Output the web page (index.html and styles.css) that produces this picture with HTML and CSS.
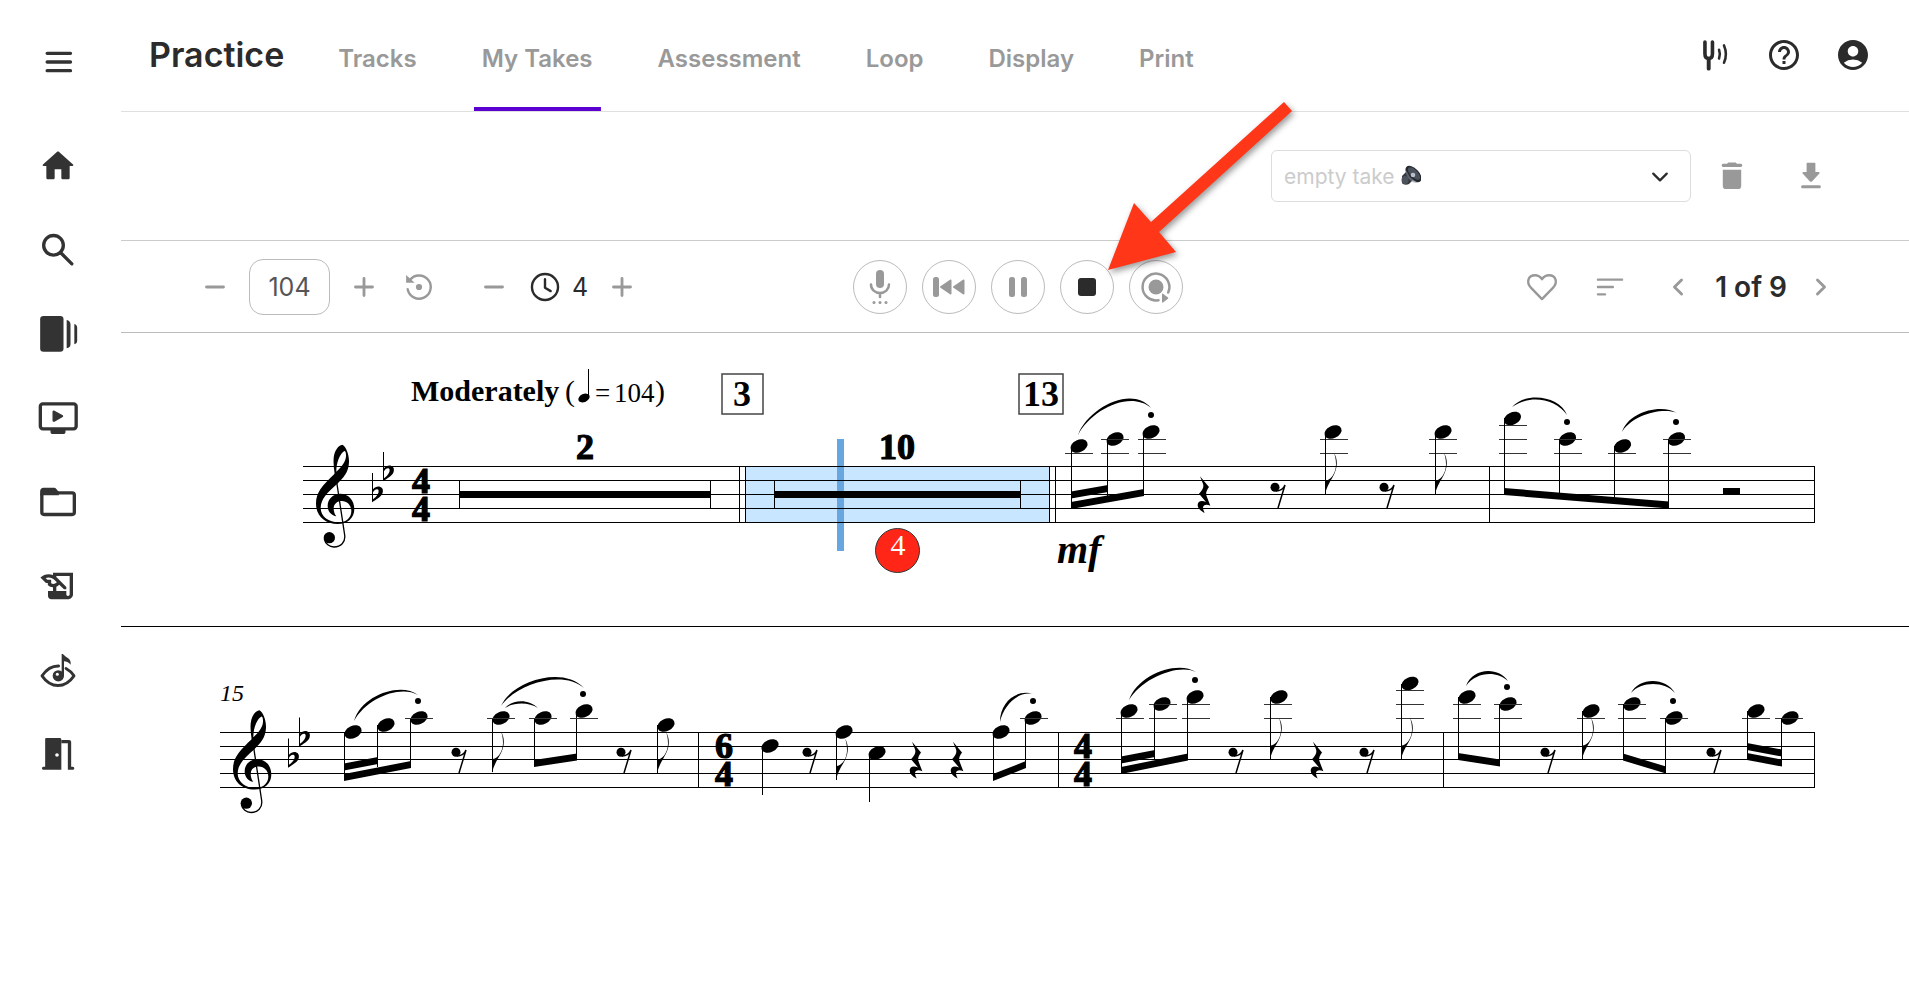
FILE: index.html
```html
<!DOCTYPE html>
<html lang="en">
<head>
	<meta charset="utf-8">
	<meta name="viewport" content="width=device-width, initial-scale=1">
	<title>Practice</title>
	<link rel="stylesheet" href="styles.css">
</head>
<body>
	<div class="app">
		<aside class="sidebar">
			<button class="icon-btn menu" aria-label="Menu">
				<svg viewBox="0 0 24 24" class="line"><path d="M5.500 6.800h14M5.500 12h14M5.500 17.200h14"/></svg>
			</button>
			<nav class="side-nav">
				<a href="#" aria-label="Home"><svg viewBox="0 0 24 24"><path d="M10 19v-5h4v5c0 .55.45 1 1 1h3c.55 0 1-.45 1-1v-7h1.700c.46 0 .68-.57.33-.87L12.670 3.600c-.38-.34-.96-.34-1.340 0l-8.360 7.530c-.34.3-.13.87.33.87H5v7c0 .55.45 1 1 1h3c.55 0 1-.45 1-1z"/></svg></a>
				<a href="#" aria-label="Search"><svg viewBox="0 0 24 24" class="line"><circle cx="9.300" cy="9.200" r="5.900"/><path d="M13.800 13.800l6.500 6.500"/></svg></a>
				<a href="#" aria-label="Collections"><svg viewBox="0 0 24 24"><rect x="1.300" y="1.200" width="14" height="21.500" rx="2"/><path d="M17.200 3.600c1.500.3 2.300 1.200 2.300 2.500v12c0 1.300-.8 2.200-2.300 2.500zM21.800 6c1.200.4 1.700 1.200 1.700 2.200v7.800c0 1-.5 1.800-1.700 2.200z"/></svg></a>
				<a href="#" aria-label="Videos"><svg viewBox="0 0 24 24"><rect x="1.400" y="3.500" width="21.500" height="15" rx="1.500" class="line"/><path d="M7.500 19h9v1.200c0 .9-.5 1.400-1.400 1.400H8.900c-.9 0-1.400-.5-1.400-1.400zM8.700 8.400c0-.8.6-1.100 1.200-.8l4.700 2.600c.7.4.7 1 0 1.400l-4.700 2.600c-.6.3-1.200 0-1.200-.8z"/></svg></a>
				<a href="#" aria-label="Folders"><svg viewBox="0 0 24 24"><rect x="2.300" y="6.500" width="19.500" height="13" rx="1.300" class="line"/><path d="M1.300 8V5.500c0-1.200.8-2 2-2h6c.8 0 1.300.3 1.800.8L12.500 6v2z"/></svg></a>
				<a href="#" aria-label="Composing"><svg viewBox="0 0 24 24"><path d="M9 4v1.380c-.83-.33-1.720-.5-2.610-.5-1.790 0-3.580.68-4.950 2.050l3.330 3.330h1.110v1.110c.86.86 1.980 1.310 3.110 1.360V15H6v3c0 1.100.9 2 2 2h10c1.660 0 3-1.340 3-3V4H9zm-1.110 6.410V8.260H5.610L4.570 7.220a5.070 5.070 0 0 1 1.820-.34c1.340 0 2.590.52 3.540 1.460l1.410 1.410-.2.2c-.51.51-1.190.8-1.920.8-.47 0-.93-.12-1.330-.34zM19 17c0 .55-.45 1-1 1s-1-.45-1-1v-2h-6v-2.590c.57-.23 1.100-.57 1.560-1.030l.2-.2L15.590 14H17v-1.410l-6-5.970V6h8v11z"/></svg></a>
				<a href="#" aria-label="Sight reading"><svg viewBox="0 0 24 24"><path class="thin" d="M12.400 9.600C8.500 9.500 4.800 12 2.400 15.500c2.400 3.500 5.800 5.800 9.600 5.800s7.200-2.300 9.600-5.800c-1.300-1.900-2.900-3.400-4.800-4.400"/><circle cx="12.200" cy="15.500" r="3.400"/><path d="M14.200 2.400c.7-.2 1.100.2 1.700.9C17.500 5.100 20 5 19.600 8.800c-1.300-1.700-2.700-2.100-4-2.100v9h-1.400z"/><circle cx="11.600" cy="14.600" r=".9" fill="#fff"/></svg></a>
				<a href="#" aria-label="Leave"><svg viewBox="0 0 24 24"><path fill-rule="evenodd" d="M5 2.400h8c.6 0 1 .4 1 1V21.500H3.300c-1.100 0-1.300-1.800 0-1.900h1V3.100c0-.4.3-.7.700-.7zm6.400 9.100a1.100 1.100 0 1 0 0 2.200 1.100 1.100 0 0 0 0-2.200z"/><path d="M14 3.600h4.600c.8 0 1.300.5 1.300 1.300v14.700h1c1.200.1 1.100 1.900 0 1.900h-3V5.500H14z"/></svg></a>
			</nav>
		</aside>

		<div class="main">
			<header class="header">
				<h1 class="title">Practice</h1>
				<nav class="tabs">
					<a href="#" class="tab">Tracks</a>
					<a href="#" class="tab active">My Takes</a>
					<a href="#" class="tab">Assessment</a>
					<a href="#" class="tab">Loop</a>
					<a href="#" class="tab">Display</a>
					<a href="#" class="tab">Print</a>
				</nav>
				<div class="account">
					<button class="icon-btn" aria-label="Tuner"><svg viewBox="0 0 24 24" class="line thinner"><path stroke-width="2.400" d="M5.300 3.400v7.800c0 2.100.8 3.100 2.500 3.100s2.500-1 2.500-3.100V3.400"/><path d="M7.800 14.500v6.600" stroke-width="2.600"/><path d="M14.700 8.500c.7 1.900.7 3.900 0 5.800M18 5.600c1.600 3.700 1.600 7.900 0 11.600"/></svg></button>
					<button class="icon-btn" aria-label="Help"><svg viewBox="0 0 24 24"><path d="M11 18h2v-2h-2v2zm1-16C6.480 2 2 6.480 2 12s4.480 10 10 10 10-4.480 10-10S17.520 2 12 2zm0 18c-4.410 0-8-3.590-8-8s3.590-8 8-8 8 3.590 8 8-3.590 8-8 8zm0-14c-2.210 0-4 1.790-4 4h2c0-1.100.9-2 2-2s2 .9 2 2c0 2-3 1.750-3 5h2c0-2.250 3-2.500 3-5 0-2.210-1.790-4-4-4z"/></svg></button>
					<button class="icon-btn" aria-label="Account"><svg viewBox="0 0 24 24"><path d="M12 2C6.480 2 2 6.480 2 12s4.480 10 10 10 10-4.480 10-10S17.520 2 12 2zm0 4c1.930 0 3.500 1.570 3.500 3.500S13.930 13 12 13s-3.500-1.570-3.500-3.500S10.070 6 12 6zm0 14c-2.030 0-4.430-.82-6.140-2.880a9.950 9.950 0 0 1 12.280 0C16.430 19.180 14.030 20 12 20z"/></svg></button>
				</div>
			</header>

			<div class="take-bar">
				<div class="take-picker">
					<select class="take-select" aria-label="Take">
						<option>empty take</option>
					</select>
					<svg class="speaker" viewBox="0 0 20 20">
						<path d="M1 11l5-5 6 9-4 4c-2 1-6 1-7-1z" fill="#34383e"/>
						<ellipse cx="4" cy="15" rx="3.500" ry="4" fill="#4d535c"/>
						<ellipse cx="12.500" cy="9" rx="10" ry="5.500" transform="rotate(46 12.500 9)" fill="#23262b"/>
						<ellipse cx="13" cy="8.500" rx="8" ry="3.700" transform="rotate(46 13 8.500)" fill="#4a515b"/>
						<circle cx="12" cy="10" r="2.300" fill="#b9c0cc"/>
						<path d="M4 3l5 9 8 6c-6 1-13-6-13-15z" fill="#858d9c" opacity=".55"/>
					</svg>
					<svg class="chevron line" viewBox="0 0 16 10"><path d="M2 2l6 6 6-6"/></svg>
				</div>
				<button class="icon-btn gray" aria-label="Delete take"><svg viewBox="0 0 24 24"><path d="M5.500 7.500h13V19c0 1.400-.8 2.200-2.200 2.200H7.700c-1.400 0-2.200-.8-2.200-2.200zM5.700 3.400h2.800l.9-.9h5.200l.9.9h2.800c1.300.1 1.300 2.100 0 2.200H5.700c-1.300-.1-1.300-2.100 0-2.200z"/></svg></button>
				<button class="icon-btn gray" aria-label="Download take"><svg viewBox="0 0 24 24"><path d="M9.500 2.700h5c.3 0 .6.300.6.600v5.900h2.300c.6 0 .9.700.5 1.100l-5.200 5.500c-.4.4-1 .4-1.400 0l-5.200-5.500c-.4-.4-.1-1.100.5-1.100h2.300V3.300c0-.3.300-.6.600-.6zM6 18.500h12c1.300.1 1.300 2.100 0 2.200H6c-1.300-.1-1.300-2.100 0-2.200z"/></svg></button>
			</div>

			<div class="toolbar">
				<div class="group">
					<button class="icon-btn gray" aria-label="Slower"><svg viewBox="0 0 24 24" class="line"><path d="M6 12h12"/></svg></button>
					<input class="tempo" type="text" value="104" aria-label="Tempo">
					<button class="icon-btn gray" aria-label="Faster"><svg viewBox="0 0 24 24" class="line"><path d="M6 12h12M12 6v12"/></svg></button>
					<button class="icon-btn gray reset" aria-label="Reset tempo"><svg viewBox="0 0 24 24"><path class="thin" d="M5.500 7.200A8.200 8.200 0 1 1 4 13.500"/><path d="M2.900 3.500l6 5.500H2.900z"/><circle cx="12" cy="12" r="2.200"/></svg></button>
					<button class="icon-btn gray count-down" aria-label="Less count in"><svg viewBox="0 0 24 24" class="line"><path d="M6 12h12"/></svg></button>
					<span class="count"><svg viewBox="0 0 24 24" class="line thinner"><circle cx="12" cy="12" r="9.200"/><path d="M12 6.500v6l4 2.400"/></svg>4</span>
					<button class="icon-btn gray" aria-label="More count in"><svg viewBox="0 0 24 24" class="line"><path d="M6 12h12M12 6v12"/></svg></button>
				</div>

				<div class="transport">
					<button class="round" aria-label="Record"><svg viewBox="0 0 36 36"><rect x="14" y="1" width="8" height="18" rx="4"/><path class="mic" d="M9 15.500c0 5 4 8.500 9 8.500s9-3.500 9-8.500M18 24v4"/><circle cx="12" cy="33.500" r="1.500"/><circle cx="18" cy="33.500" r="1.500"/><circle cx="24" cy="33.500" r="1.500"/></svg></button>
					<button class="round" aria-label="Rewind"><svg viewBox="0 0 36 36"><rect x="2" y="8" width="6" height="20" rx="2.500"/><path d="M9.500 17.200L19 10.700c.8-.5 1.500-.1 1.500.8v13c0 .9-.7 1.300-1.500.8l-9.500-6.500c-.6-.4-.6-1.200 0-1.600zM22.500 17.200l9.500-6.500c.8-.5 1.500-.1 1.500.8v13c0 .9-.7 1.300-1.500.8l-9.500-6.500c-.6-.4-.6-1.200 0-1.600z"/></svg></button>
					<button class="round" aria-label="Pause"><svg viewBox="0 0 36 36"><rect x="9" y="8" width="6" height="20" rx="2.500"/><rect x="21" y="8" width="6" height="20" rx="2.500"/></svg></button>
					<div class="stop-wrap">
						<button class="round stop" aria-label="Stop"><svg viewBox="0 0 36 36"><rect x="9" y="9" width="18" height="18" rx="3"/></svg></button>
						<svg class="pointer" viewBox="0 0 190 172"><path d="M179 1l8 9L54 131l17 20L3 169l26-67 17 19z"/></svg>
					</div>
					<button class="round" aria-label="Play along"><svg viewBox="0 0 36 36"><circle cx="18" cy="18" r="7.500"/><path class="ring" d="M30.200 23.500A13.400 13.400 0 1 0 20.500 31.200"/><path d="M24 25v8c0 .7.500.8 1 .5l5-3.700c.4-.3.400-.9 0-1.200l-5-3.900c-.5-.4-1-.3-1 .3z"/></svg></button>
				</div>

				<div class="group right">
					<button class="icon-btn gray" aria-label="Favorite"><svg viewBox="0 0 24 24"><path class="thin" d="M12 20.500L4.300 12.600C.4 8.500 2.500 3.700 7 3.700c2.200 0 3.900 1.100 5 2.800 1.100-1.700 2.800-2.800 5-2.800 4.500 0 6.600 4.800 2.700 8.900z"/></svg></button>
					<button class="icon-btn gray sort" aria-label="Sort"><svg viewBox="0 0 24 24" class="line thinner"><path d="M3.500 6.800h17M3.500 12h10.500M3.500 17.200h5"/></svg></button>
					<button class="icon-btn gray prev" aria-label="Previous"><svg viewBox="0 0 24 24" class="line"><path d="M14.500 7l-5 5 5 5"/></svg></button>
					<span class="page">1 of 9</span>
					<button class="icon-btn gray" aria-label="Next"><svg viewBox="0 0 24 24" class="line"><path d="M9.500 7l5 5-5 5"/></svg></button>
				</div>
			</div>

			<!-- first system -->
			<section class="system">
				<svg class="score" viewBox="121 333 1788 293">
					<defs>
						<ellipse id="head" rx="9" ry="6.200" transform="rotate(-25)"/>
						<circle id="dot" r="3"/>
						<path id="flag" d="M0 0V-14C3-13 11-19 11-30C11-35 10-39 9-41.500C13-35 12.500-27 9-20C6-14 2-9 0 0Z"/>
						<g id="rest4" transform="scale(.3333) translate(-492 -433)">
							<path d="M480 380L507 412C498 425 497 432 500 440L511 468C500 463 489 465 489 474C489 480 492 485 494 490C480 483 473 475 473 466C473 455 484 450 498 457L477 432C489 420 492 412 489 402Z"/>
						</g>
						<g id="rest8">
							<circle cx="-5" cy="-7.200" r="4.500"/>
							<path class="ink" stroke-width="1.500" d="M-4-3.500C0-3.500 4-6 5-9.500L-2 13.500"/>
						</g>
						<g id="flat" transform="scale(.3333)">
							<path fill-rule="evenodd" d="M0-63H3V-14C9-21 18-24 25-21C32-19 34-12 32-4C29 8 12 16 0 25ZM3-5V16C14 8 21-2 20-10C17-18 8-14 3-5Z"/>
						</g>
						<g id="clef" transform="scale(.3333) translate(0 -433)">
							<path fill-rule="evenodd" d="M157 285C170 292 178 318 177 338C176 368 160 385 142 402C112 428 93 447 92 474C92 501 116 518 146 518C170 518 184 503 184 484C184 467 172 454 155 454C142 454 132 462 131 475C131 486 134 494 139 500C124 497 113 486 113 468C113 447 130 432 150 432C176 432 193 452 193 478C193 506 172 523 143 523C104 523 78 498 78 462C78 428 96 408 134 372C131 355 130 340 131 325C133 303 145 287 157 285ZM163 304C150 312 139 338 139 366C157 350 169 333 168 316C168 308 166 304 163 304Z"/>
							<path class="ink" stroke-width="4" d="M136 370L164 556C167 578 152 592 132 592C118 592 106 582 103 568"/>
							<circle cx="118" cy="564" r="17"/>
						</g>
					</defs>

					<rect x="745" y="466" width="304" height="57" fill="#c8e6ff"/>
					<rect x="837" y="439" width="7" height="112" fill="#67a6de"/>
					<path class="ink" d="M303 466.500H1815M303 480.500H1815M303 494.500H1815M303 508.500H1815M303 522.500H1815"/>
					<path class="ink" d="M739.500 466V523M745.500 466V523M1049.500 466V523M1055.500 466V523M1489.500 466V523M1814.500 466V523"/>

					<use href="#clef" x="290" y="494"/>
					<use href="#flat" x="372" y="494"/>
					<use href="#flat" x="383" y="473"/>
					<text class="digit heavy"><tspan x="421" y="493">4</tspan><tspan x="421" y="521">4</tspan></text>

					<text class="tempo-name" x="411" y="401">Moderately</text>
					<text class="tempo-paren" x="565" y="401">(</text>
					<ellipse cx="584" cy="398" rx="6" ry="4" transform="rotate(-25 584 398)"/>
					<path class="ink" d="M588.500 369V397"/>
					<text class="tempo-value" x="595" y="402">=</text>
					<text class="tempo-value" x="614" y="402">104</text>
					<text class="tempo-paren" x="655" y="401">)</text>

					<rect class="mark" x="722" y="374" width="41" height="40"/>
					<text class="digit" x="742" y="406">3</text>
					<rect class="mark" x="1019" y="374" width="44" height="40"/>
					<text class="digit" x="1041" y="406">13</text>

					<!-- multi-measure rests -->
					<text class="digit heavy" x="585" y="459">2</text>
					<path d="M459 491H711V498H459ZM774 491H1021V498H774Z"/>
					<path class="ink" d="M459.500 481V509M710.500 481V509M774.500 481V509M1020.500 481V509"/>
					<text class="digit heavy" x="897" y="459">10</text>
					<circle cx="897.500" cy="550.500" r="22" fill="#ff2618" stroke="#333"/>
					<text class="badge" x="898" y="555">4</text>

					<!-- measure 13 -->
					<text class="dynamic" x="1057" y="563">mf</text>
					<path d="M1078 435C1088 408 1132 385 1151 408C1130 390 1091 410 1078 435Z"/>
					<use href="#head" x="1079" y="446"/><use href="#head" x="1115" y="439"/><use href="#head" x="1151" y="432"/>
					<use href="#dot" x="1151" y="415"/>
					<path class="ink ledger" d="M1065 453.500H1093M1101 453.500H1129M1101 439.500H1129M1138 453.500H1166M1138 439.500H1166"/>
					<path class="ink" d="M1071.500 446V508M1107.500 439V496M1143.500 432V495"/>
					<path d="M1071 502L1144 489V496L1071 509ZM1071 491.500L1108 485V492L1071 498.500Z"/>
					<use href="#rest4" x="1204" y="494"/>
					<use href="#rest8" x="1280" y="494.500"/>
					<use href="#head" x="1333" y="432"/><use href="#flag" x="1325" y="494.500"/>
					<use href="#rest8" x="1389" y="494.500"/>
					<use href="#head" x="1443" y="432"/><use href="#flag" x="1435" y="494.500"/>
					<path class="ink ledger" d="M1320 453.500H1348M1320 439.500H1348M1429 453.500H1457M1429 439.500H1457"/>
					<path class="ink" d="M1325.500 432V494M1435.500 432V494"/>

					<!-- measure 14 -->
					<path d="M1512 407C1526 391 1560 396 1567 415C1556 399 1530 394 1512 407Z"/>
					<path d="M1622 432C1628 412 1661 403 1677 413C1662 407 1632 415 1622 432Z"/>
					<use href="#head" x="1512.500" y="418.500"/><use href="#head" x="1567.500" y="439"/><use href="#head" x="1622.500" y="446"/><use href="#head" x="1676.500" y="439"/>
					<use href="#dot" x="1567" y="422"/><use href="#dot" x="1676" y="422"/>
					<path class="ink ledger" d="M1499 425.500H1527M1499 439.500H1527M1499 453.500H1527M1554 439.500H1582M1554 453.500H1582M1608 453.500H1636M1663 439.500H1691M1663 453.500H1691"/>
					<path class="ink" d="M1504.500 418V494M1559.500 439V494M1614.500 446V500M1668.500 439V505"/>
					<path d="M1504 488L1669 501.500V508.500L1504 495ZM1723 488H1740V495H1723Z"/>
				</svg>
			</section>

			<!-- second system -->
			<section class="system last">
				<svg class="score" viewBox="121 627 1788 200">
					<path class="ink" d="M220 732.500H1815M220 746.500H1815M220 759.500H1815M220 773.500H1815M220 787.500H1815"/>
					<path class="ink" d="M698.500 732V788M1058.500 732V788M1443.500 732V788M1814.500 732V788"/>
					<text class="bar-number" x="220" y="701">15</text>
					<use href="#clef" x="207" y="759.500"/>
					<use href="#flat" x="288" y="759.500"/>
					<use href="#flat" x="299" y="738.500"/>

					<!-- measure 15 -->
					<path d="M354 721C362 694 402 682 418 695C400 685 367 698 354 721Z"/>
					<use href="#head" x="353" y="732"/><use href="#head" x="386" y="725"/><use href="#head" x="419" y="718"/>
					<use href="#dot" x="418" y="701"/>
					<path class="ink" d="M344.500 732V780M377.500 725V767M410.500 718V766"/>
					<path d="M344 774L411 761V768L344 781ZM344 763.500L378 757V764L344 770.500Z"/>
					<use href="#rest8" x="461" y="759.500"/>
					<path d="M501 706C511 682 562 665 584 688C562 669 515 685 501 706Z"/>
					<path d="M505 708C513 699 529 699 538 708C529 702 514 702 505 708Z"/>
					<use href="#head" x="501" y="718"/><use href="#flag" x="492" y="773"/>
					<use href="#head" x="543" y="718"/><use href="#head" x="584" y="711"/>
					<use href="#dot" x="583" y="694"/>
					<path class="ink" d="M492.500 718V772M534.500 718V765M576.500 711V758"/>
					<path class="ink ledger" d="M405 718.500H433M487 718.500H515M529 718.500H557M570 718.500H598"/>
					<path d="M534 760L577 753.500V760.500L534 767Z"/>
					<use href="#rest8" x="626" y="759.500"/>
					<use href="#head" x="666" y="725"/><use href="#flag" x="657" y="773.500"/>
					<path class="ink" d="M657.500 725V773"/>

					<!-- measure 16 -->
					<text class="digit heavy"><tspan x="724" y="758">6</tspan><tspan x="724" y="786">4</tspan></text>
					<use href="#head" x="770" y="746"/>
					<use href="#rest8" x="812" y="759.500"/>
					<use href="#head" x="844" y="732"/><use href="#flag" x="836" y="780"/>
					<use href="#head" x="877" y="753"/>
					<use href="#rest4" x="916" y="759.500"/>
					<use href="#rest4" x="957" y="759.500"/>
					<path d="M1000 722C1000 701 1018 689 1033 694C1019 691 1004 704 1000 722Z"/>
					<use href="#head" x="1001" y="732"/><use href="#head" x="1033" y="718"/>
					<use href="#dot" x="1033" y="701"/>
					<path class="ink" d="M762.500 746V795M836.500 732V780M869.500 753V802M993.500 732V778M1025.500 718V765"/>
					<path class="ink ledger" d="M1020 718.500H1048"/>
					<path d="M993 774L1026 761V768L993 781Z"/>

					<!-- measure 17 -->
					<text class="digit heavy"><tspan x="1083" y="758">4</tspan><tspan x="1083" y="786">4</tspan></text>
					<path d="M1129 700C1138 674 1178 660 1196 672C1178 663 1141 679 1129 700Z"/>
					<use href="#head" x="1129" y="711"/><use href="#head" x="1162" y="704"/><use href="#head" x="1195" y="697"/>
					<use href="#dot" x="1195" y="680"/>
					<path class="ink ledger" d="M1116 718.500H1144M1149 718.500H1177M1149 704.500H1177M1182 718.500H1210M1182 704.500H1210"/>
					<path class="ink" d="M1121.500 711V770M1154.500 704V760M1187.500 697V758"/>
					<path d="M1121 767L1188 753.500V760.500L1121 774ZM1121 756.500L1155 750V757L1121 763.500Z"/>
					<use href="#rest8" x="1238" y="759.500"/>
					<use href="#head" x="1279" y="697"/><use href="#flag" x="1270" y="759.500"/>
					<use href="#rest4" x="1317" y="759.500"/>
					<use href="#rest8" x="1369" y="759.500"/>
					<use href="#head" x="1410" y="683.500"/><use href="#flag" x="1401" y="759.500"/>
					<path class="ink ledger" d="M1264 718.500H1292M1264 704.500H1292M1396 718.500H1424M1396 704.500H1424M1396 690.500H1424"/>
					<path class="ink" d="M1270.500 697V759M1401.500 684V759"/>

					<!-- measure 18 -->
					<path d="M1466 686C1473 667 1499 667 1508 681C1497 671 1477 671 1466 686Z"/>
					<use href="#head" x="1467" y="697"/><use href="#head" x="1508" y="704"/>
					<use href="#dot" x="1507" y="687"/>
					<use href="#rest8" x="1550" y="759.500"/>
					<use href="#head" x="1591" y="711"/><use href="#flag" x="1582" y="759.500"/>
					<path d="M1631 693C1639 677 1666 677 1675 693C1665 681 1641 681 1631 693Z"/>
					<use href="#head" x="1632" y="704"/><use href="#head" x="1674" y="718"/>
					<use href="#dot" x="1673" y="701"/>
					<use href="#rest8" x="1716" y="759.500"/>
					<use href="#head" x="1756" y="711"/><use href="#head" x="1790" y="718"/>
					<path class="ink ledger" d="M1453 718.500H1481M1453 704.500H1481M1494 718.500H1522M1494 704.500H1522M1577 718.500H1605M1618 718.500H1646M1618 704.500H1646M1660 718.500H1688M1742 718.500H1770M1775 718.500H1803"/>
					<path class="ink" d="M1458.500 697V758M1499.500 704V764M1582.500 711V759M1623.500 704V758M1665.500 718V770M1747.500 711V758M1781.500 718V764"/>
					<path d="M1458 753L1500 759.500V766.500L1458 760ZM1623 753.500L1666 766.500V773.500L1623 760.500ZM1747 743L1782 749.500V756.500L1747 750ZM1747 753L1782 759.500V766.500L1747 760Z"/>
				</svg>
			</section>
		</div>
	</div>
</body>
</html>
```
FILE: styles.css
```css
*{
	box-sizing: border-box;
}
body{
	margin: 0;
	background-color: #fff;
	color: #2b2b2b;
	font-family: Inter, "Liberation Sans", sans-serif;
}
a{
	color: inherit;
	text-decoration: none;
}
button{
	padding: 0;
	border: none;
	background: none;
	color: inherit;
	cursor: pointer;
}
svg{
	display: block;
	fill: currentColor;
}
.line, .thin{
	fill: none;
	stroke: currentColor;
	stroke-width: 2;
	stroke-linecap: round;
	stroke-linejoin: round;
}
.thin, .thinner{
	stroke-width: 1.7;
}
.main{
	flex: 1;
	min-width: 0;
}
.icon-btn{
	display: block;
	flex: none;
}
.icon-btn svg{
	width: 34px;
	height: 34px;
}
.gray{
	color: #999;
}
.app{
	display: flex;
	min-height: 100vh;
}

/* sidebar */
.sidebar{
	flex: none;
	width: 121px;
	padding: 42px 43px 0 38px;
	color: #333;
}
.sidebar svg{
	width: 40px;
	height: 40px;
}
.side-nav{
	display: flex;
	flex-direction: column;
	gap: 44px;
	margin-top: 64px;
}

/* header */
.header{
	display: flex;
	height: 112px;
	padding: 0 38px 0 28px;
	border-bottom: 1px solid #e0e0e0;
}
.title{
	margin: 0 46px 0 0;
	padding-top: 35px;
	font-size: 34px;
	font-weight: 600;
	line-height: 40px;
}
.tabs{
	display: flex;
	gap: 49px;
}
.tab{
	padding: 45px 8px 0;
	color: #999;
	font-size: 24px;
	font-weight: 600;
	line-height: 28px;
}
.active{
	background: linear-gradient(#5b00d1, #5b00d1) bottom / 100% 4px no-repeat;
}
.account{
	display: flex;
	align-items: flex-start;
	gap: 33px;
	margin-left: auto;
	padding-top: 37px;
}
.account svg{
	width: 36px;
	height: 36px;
}

/* takes */
.take-bar{
	display: flex;
	align-items: center;
	justify-content: flex-end;
	height: 129px;
	padding-right: 81px;
	border-bottom: 1px solid #ccc;
}
.take-bar .icon-btn{
	margin-left: 45px;
}
.take-bar .take-picker + .icon-btn{
	margin-left: 24px;
}
.take-picker{
	position: relative;
	width: 420px;
}
.take-select{
	display: block;
	width: 100%;
	height: 52px;
	padding: 0 12px;
	border: 1px solid #ddd;
	border-radius: 6px;
	background-color: #fff;
	color: #ccc;
	font-family: inherit;
	font-size: 21px;
	appearance: none;
}
.speaker{
	position: absolute;
	left: 130px;
	top: 15px;
	width: 20px;
	height: 20px;
	pointer-events: none;
}
.chevron{
	position: absolute;
	right: 22px;
	top: 21px;
	width: 18px;
	height: 12px;
	pointer-events: none;
}

/* toolbar */
.toolbar{
	display: grid;
	grid-template-columns: 1fr auto 1fr;
	align-items: center;
	height: 92px;
	padding: 0 71px 0 77px;
	border-bottom: 1px solid #bbb;
}
.group{
	display: flex;
	align-items: center;
	gap: 17px;
}
.right{
	justify-content: flex-end;
}
.tempo{
	width: 81px;
	height: 56px;
	padding: 0;
	border: 1px solid #bbb;
	border-radius: 14px;
	color: #555;
	font-family: inherit;
	font-size: 25px;
	text-align: center;
}
.reset{
	margin-left: 4px;
}
.count-down{
	margin-left: 24px;
}
.count{
	display: flex;
	align-items: center;
	gap: 10px;
	font-size: 25px;
}
.count svg{
	width: 34px;
	height: 34px;
}
.transport{
	display: flex;
	gap: 15px;
}
.round{
	display: flex;
	align-items: center;
	justify-content: center;
	width: 54px;
	height: 54px;
	border: 1px solid #bbb;
	border-radius: 50%;
	color: #999;
}
.round svg{
	width: 36px;
	height: 36px;
}
.stop{
	color: #2b2b2b;
}
.mic, .ring{
	fill: none;
	stroke: currentColor;
	stroke-width: 2.5;
	stroke-linecap: round;
}
.stop-wrap{
	position: relative;
}
.pointer{
	position: absolute;
	left: 45px;
	bottom: 41px;
	z-index: 1;
	width: 190px;
	height: 172px;
	fill: #ff3617;
	filter: drop-shadow(2px 3px 3px rgba(0, 0, 0, .4));
	pointer-events: none;
}
.sort, .prev{
	margin-left: 17px;
}
.page{
	padding-left: 3px;
	font-size: 28px;
	font-weight: 600;
}

/* sheet music */
.system{
	border-bottom: 1px solid #000;
}
.last{
	border-bottom: none;
}
.score{
	width: 100%;
	height: auto;
	fill: #000;
	font-family: "Liberation Serif", serif;
}
.ink{
	fill: none;
	stroke: #000;
}
.ledger{
	stroke: #333;
}
.mark{
	fill: none;
	stroke: #444;
	stroke-width: 1.5;
}
.digit{
	font-size: 36px;
	font-weight: bold;
	text-anchor: middle;
}
.heavy{
	stroke: #000;
	stroke-width: 1.2;
}
.tempo-name{
	font-size: 30px;
	font-weight: bold;
}
.tempo-paren{
	font-size: 30px;
}
.tempo-value{
	font-size: 27px;
}
.bar-number{
	font-size: 24px;
	font-style: italic;
}
.dynamic{
	font-size: 40px;
	font-weight: bold;
	font-style: italic;
}
.badge{
	fill: #fff;
	font-size: 30px;
	text-anchor: middle;
}
```
